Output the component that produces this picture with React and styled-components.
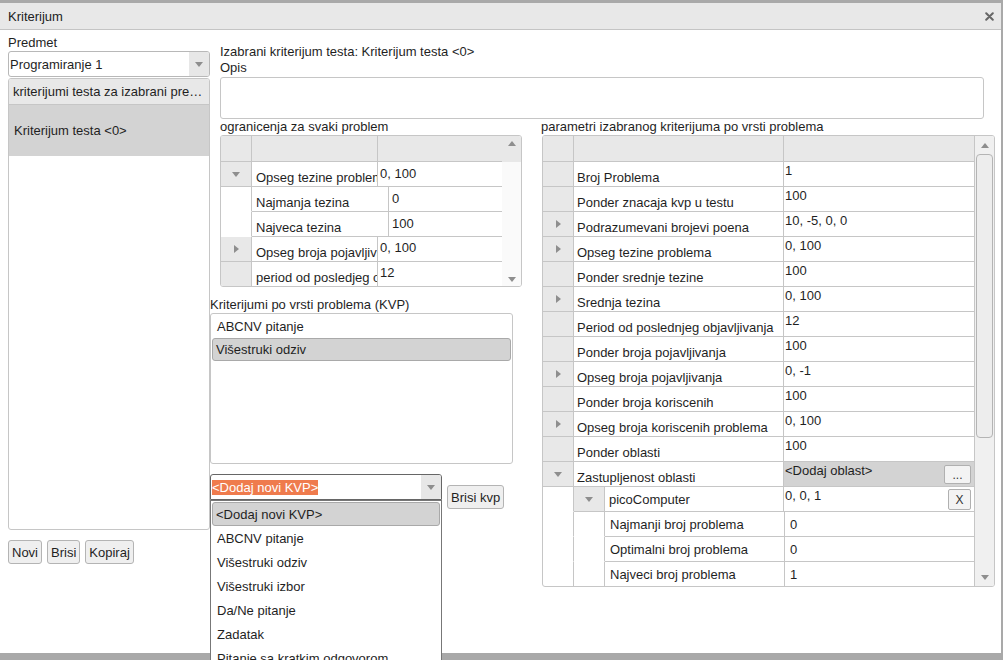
import React from 'react';
import styled, { createGlobalStyle, css } from 'styled-components';

const GlobalStyle = createGlobalStyle`
  html, body {
    margin: 0;
    padding: 0;
  }
  body {
    font-family: "Liberation Sans", Arial, sans-serif;
    font-size: 13px;
    color: #1f1f1f;
    background: #a8a8a8;
  }
  * {
    box-sizing: border-box;
  }
`;

const LINE = '#c6c6c6';
const HEAD = '#e8e8e8';
const SELECTED = '#d3d3d3';

const Screen = styled.div`
  width: 1003px;
  height: 660px;
  overflow: hidden;
  padding-top: 3px;
  background: #a9a9a9;
`;

const Window = styled.div`
  width: 1001px;
  height: 650px;
  background: #fff;
  display: flex;
  flex-direction: column;
`;

const TitleBar = styled.div`
  height: 27px;
  flex: 0 0 27px;
  background: ${HEAD};
  border-bottom: 1px solid #c4c4c4;
  display: flex;
  align-items: center;
  justify-content: space-between;
  padding: 0 7px 0 8px;
`;

const TitleText = styled.span`
  font-size: 13px;
  color: #222;
`;

const CloseIcon = () => (
  <svg width="9" height="9" viewBox="0 0 9 9">
    <path d="M1.2 1.2 L7.8 7.8 M7.8 1.2 L1.2 7.8" stroke="#666" strokeWidth="2" strokeLinecap="round" />
  </svg>
);

const Body = styled.div`
  flex: 1;
  display: flex;
`;

/* ---------- shared bits ---------- */

const Tri = styled.span`
  display: inline-block;
  width: 0;
  height: 0;
  ${(p) =>
    p.$dir === 'right'
      ? css`
          border-top: 4px solid transparent;
          border-bottom: 4px solid transparent;
          border-left: 5px solid #8e8e8e;
        `
      : p.$dir === 'up'
      ? css`
          border-left: 4px solid transparent;
          border-right: 4px solid transparent;
          border-bottom: 5px solid #8e8e8e;
        `
      : css`
          border-left: 4px solid transparent;
          border-right: 4px solid transparent;
          border-top: 5px solid #8e8e8e;
        `}
`;

const Caption = styled.div`
  line-height: 16px;
  height: 16px;
  white-space: nowrap;
  padding-left: ${(p) => p.$indent || 0}px;
  margin-top: ${(p) => p.$top || 0}px;
`;

const Button = styled.button`
  font-family: inherit;
  font-size: 13px;
  color: #1f1f1f;
  height: 24px;
  padding: 0 3px;
  background: #efefef;
  border: 1px solid #b4b4b4;
  border-radius: 3px;
  margin-top: ${(p) => p.$top || 0}px;
`;

const SmallButton = styled.button`
  font-family: inherit;
  font-size: 12px;
  color: #333;
  height: ${(p) => p.$h || 20}px;
  width: ${(p) => p.$w || 24}px;
  padding: 0;
  margin-right: 3px;
  align-self: center;
  background: #f3f3f3;
  border: 1px solid #b0b0b0;
  border-radius: 2px;
  line-height: 1;
`;

const Combo = styled.div`
  position: relative;
  width: ${(p) => p.$w}px;
  height: 26px;
  display: flex;
  align-items: center;
  background: #fff;
  border: 1px solid ${(p) => (p.$open ? '#666' : '#b8b8b8')};
  border-radius: ${(p) => (p.$open ? '3px 3px 0 0' : '3px')};
`;

const ComboText = styled.div`
  flex: 1;
  padding-left: 1px;
  white-space: nowrap;
  overflow: hidden;
`;

const Highlight = styled.span`
  background: #ef7b4d;
  color: #fff;
  line-height: 15px;
  display: inline-block;
`;

const ComboArrow = styled.div`
  width: 20px;
  align-self: stretch;
  background: #e7e7e7;
  border-radius: 0 2px 2px 0;
  display: flex;
  align-items: center;
  justify-content: center;
`;

const Popup = styled.div`
  position: absolute;
  top: 25px;
  left: -1px;
  width: 232px;
  height: 180px;
  background: #fff;
  border: 1px solid #777;
  padding: 1px 1px;
  z-index: 5;
`;

const OptionItem = styled.div`
  height: 24px;
  display: flex;
  align-items: center;
  padding-left: ${(p) => (p.$selected ? 3 : 4)}px;
  white-space: nowrap;
  border-radius: 3px;
  border: 1px solid ${(p) => (p.$selected ? '#a9a9a9' : 'transparent')};
  background: ${(p) => (p.$selected ? SELECTED : 'transparent')};
`;

/* ---------- left pane ---------- */

const LeftPane = styled.div`
  width: 210px;
  padding: 5px 0 0 8px;
  display: flex;
  flex-direction: column;
`;

const ListBox = styled.div`
  width: ${(p) => p.$w}px;
  height: ${(p) => p.$h}px;
  margin-top: ${(p) => p.$top || 0}px;
  border: 1px solid ${LINE};
  border-radius: 3px;
  overflow: hidden;
  padding: ${(p) => p.$pad || 0};
`;

const ListHeader = styled.div`
  height: 26px;
  background: ${HEAD};
  border-bottom: 1px solid ${LINE};
  padding: 0 4px;
  display: flex;
  align-items: center;
  white-space: nowrap;
  overflow: hidden;
  & > span {
    overflow: hidden;
    text-overflow: ellipsis;
  }
`;

const ListItem = styled.div`
  height: ${(p) => p.$h || 23}px;
  display: flex;
  align-items: center;
  padding-left: ${(p) => (p.$framed ? 3 : 4)}px;
  white-space: nowrap;
  border-radius: ${(p) => (p.$framed ? 3 : 0)}px;
  border: 1px solid ${(p) => (p.$framed ? '#a9a9a9' : 'transparent')};
  background: ${(p) => (p.$selected ? SELECTED : 'transparent')};
`;

const ButtonRow = styled.div`
  display: flex;
  gap: 5px;
  margin-top: ${(p) => p.$top || 0}px;
`;

/* ---------- main area ---------- */

const MainPane = styled.div`
  flex: 1;
  padding-top: 14px;
  display: flex;
  flex-direction: column;
`;

const Header = styled.div`
  padding-left: 10px;
`;

const TextArea = styled.div`
  width: 764px;
  height: 42px;
  margin-top: 1px;
  border: 1px solid ${LINE};
  border-radius: 3px;
`;

const Columns = styled.div`
  display: flex;
  align-items: flex-start;
`;

const MidPane = styled.div`
  width: 312px;
  display: flex;
  flex-direction: column;
`;

const RightPane = styled.div`
  margin-left: 19px;
  display: flex;
  flex-direction: column;
`;

const ComboRow = styled.div`
  display: flex;
  align-items: flex-start;
  gap: 5px;
  margin-top: 10px;
`;

/* ---------- tree table ---------- */

const TableBox = styled.div`
  width: ${(p) => p.$w}px;
  height: ${(p) => p.$h}px;
  margin-left: ${(p) => p.$left || 0}px;
  border: 1px solid ${LINE};
  border-radius: 3px;
  overflow: hidden;
  display: flex;
`;

const Grid = styled.div`
  flex: 1;
  display: flex;
  flex-direction: column;
`;

const Row = styled.div`
  flex: 0 0 ${(p) => p.$h || 25}px;
  height: ${(p) => p.$h || 25}px;
  display: flex;
  background: ${(p) => p.$bg || 'transparent'};
`;

const CellBase = styled.div`
  height: 100%;
  min-width: 0;
  display: flex;
  white-space: nowrap;
  overflow: hidden;
  line-height: 15px;
  border-bottom: 1px solid ${(p) => (p.$noLine ? 'transparent' : LINE)};
`;

const Gutter = styled(CellBase)`
  flex: 0 0 31px;
  align-items: center;
  justify-content: center;
  background: ${(p) => (p.$blank ? 'transparent' : HEAD)};
  border-right: 1px solid ${LINE};
`;

const LabelCell = styled(CellBase)`
  flex: 0 0 ${(p) => p.$w}px;
  align-items: ${(p) => (p.$mid ? 'center' : 'flex-end')};
  padding: 0 0 ${(p) => (p.$mid ? 0 : 1)}px ${(p) => p.$pl || 4}px;
  border-right: 1px solid ${LINE};
`;

const ValueCell = styled(CellBase)`
  flex: 1;
  align-items: ${(p) => (p.$mid ? 'center' : 'flex-start')};
  justify-content: space-between;
  padding: ${(p) => p.$pt || 0}px 0 0 ${(p) => p.$pl || 0}px;
  background: ${(p) => p.$bg || 'transparent'};
`;

const ScrollBar = styled.div`
  flex: 0 0 ${(p) => p.$w}px;
  display: flex;
  flex-direction: column;
  align-items: stretch;
  background: ${(p) => p.$bg};
  border-left: ${(p) => (p.$edge ? `1px solid ${LINE}` : 'none')};
`;

const ScrollArrow = styled.div`
  height: ${(p) => p.$h || 18}px;
  display: flex;
  align-items: center;
  justify-content: center;
`;

const Thumb = styled.div`
  height: ${(p) => p.$h}px;
  margin: 0 1px 0 1px;
  border: 1px solid #b4b4b4;
  border-radius: 4px;
  background: #ededed;
`;

const Spacer = styled.div`
  flex: 1;
`;

const HeaderRow = ({ cols }) => (
  <Row $h={26} $bg={HEAD}>
    <Gutter />
    <LabelCell $w={cols[0]} />
    <ValueCell />
  </Row>
);

/* ---------- data ---------- */

const kvpOptions = [
  '<Dodaj novi KVP>',
  'ABCNV pitanje',
  'Višestruki odziv',
  'Višestruki izbor',
  'Da/Ne pitanje',
  'Zadatak',
  'Pitanje sa kratkim odgovorom',
];

const params = [
  { label: 'Broj Problema', value: '1' },
  { label: 'Ponder znacaja kvp u testu', value: '100' },
  { label: 'Podrazumevani brojevi poena', value: '10, -5, 0, 0', arrow: 'right' },
  { label: 'Opseg tezine problema', value: '0, 100', arrow: 'right' },
  { label: 'Ponder srednje tezine', value: '100' },
  { label: 'Srednja tezina', value: '0, 100', arrow: 'right' },
  { label: 'Period od poslednjeg objavljivanja', value: '12' },
  { label: 'Ponder broja pojavljivanja', value: '100' },
  { label: 'Opseg broja pojavljivanja', value: '0, -1', arrow: 'right' },
  { label: 'Ponder broja koriscenih', value: '100' },
  { label: 'Opseg broja koriscenih problema', value: '0, 100', arrow: 'right' },
  { label: 'Ponder oblasti', value: '100' },
];

const areaChildren = [
  { label: 'Najmanji broj problema', value: '0' },
  { label: 'Optimalni broj problema', value: '0' },
  { label: 'Najveci broj problema', value: '1' },
];

/* ---------- tables ---------- */

const LimitsTable = () => (
  <TableBox $w={302} $h={152}>
    <Grid>
      <HeaderRow cols={[126]} />
      <Row>
        <Gutter>
          <Tri $dir="down" />
        </Gutter>
        <LabelCell $w={126}>Opseg tezine problema</LabelCell>
        <ValueCell $pt={4} $pl={2}>0, 100</ValueCell>
      </Row>
      <Row>
        <Gutter $blank $noLine />
        <LabelCell $w={137}>Najmanja tezina</LabelCell>
        <ValueCell $pt={4} $pl={3}>0</ValueCell>
      </Row>
      <Row>
        <Gutter $blank $noLine />
        <LabelCell $w={137}>Najveca tezina</LabelCell>
        <ValueCell $pt={4} $pl={3}>100</ValueCell>
      </Row>
      <Row>
        <Gutter>
          <Tri $dir="right" />
        </Gutter>
        <LabelCell $w={126}>Opseg broja pojavljivanja</LabelCell>
        <ValueCell $pt={3} $pl={2}>0, 100</ValueCell>
      </Row>
      <Row>
        <Gutter />
        <LabelCell $w={126}>period od posledjeg objavljivanja</LabelCell>
        <ValueCell $pt={3} $pl={2}>12</ValueCell>
      </Row>
    </Grid>
    <ScrollBar $w={19} $bg={`linear-gradient(${HEAD} 26px, #fafafa 26px)`}>
      <ScrollArrow $h={14}>
        <Tri $dir="up" />
      </ScrollArrow>
      <Spacer />
      <ScrollArrow $h={14}>
        <Tri $dir="down" />
      </ScrollArrow>
    </ScrollBar>
  </TableBox>
);

const ParamsTable = () => (
  <TableBox $w={453} $h={452} $left={1}>
    <Grid>
      <HeaderRow cols={[210]} />
      {params.map((p) => (
        <Row key={p.label}>
          <Gutter>{p.arrow && <Tri $dir={p.arrow} />}</Gutter>
          <LabelCell $w={210} $pl={3}>{p.label}</LabelCell>
          <ValueCell $pt={1} $pl={1}>
            {p.value}
          </ValueCell>
        </Row>
      ))}
      <Row>
        <Gutter>
          <Tri $dir="down" />
        </Gutter>
        <LabelCell $w={210} $pl={3}>Zastupljenost oblasti</LabelCell>
        <ValueCell $pt={1} $pl={1} $bg={SELECTED}>
          <span>&lt;Dodaj oblast&gt;</span>
          <SmallButton $w={27} $h={19}>...</SmallButton>
        </ValueCell>
      </Row>
      <Row>
        <Gutter $blank $noLine />
        <Gutter>
          <Tri $dir="down" />
        </Gutter>
        <LabelCell $w={179} $mid>
          picoComputer
        </LabelCell>
        <ValueCell $pt={1} $pl={1}>
          <span>0, 0, 1</span>
          <SmallButton $w={23} $h={21}>X</SmallButton>
        </ValueCell>
      </Row>
      {areaChildren.map((c) => (
        <Row key={c.label}>
          <Gutter $blank $noLine />
          <Gutter $blank $noLine />
          <LabelCell $w={180} $mid $pl={5}>
            {c.label}
          </LabelCell>
          <ValueCell $mid $pl={5}>
            {c.value}
          </ValueCell>
        </Row>
      ))}
    </Grid>
    <ScrollBar $w={20} $bg="#f0f0f0" $edge>
      <ScrollArrow $h={18}>
        <Tri $dir="up" />
      </ScrollArrow>
      <Thumb $h={284} />
      <Spacer />
      <ScrollArrow $h={18}>
        <Tri $dir="down" />
      </ScrollArrow>
    </ScrollBar>
  </TableBox>
);

export default function App() {
  return (
    <>
      <GlobalStyle />
      <Screen>
        <Window>
          <TitleBar>
            <TitleText>Kriterijum</TitleText>
            <CloseIcon />
          </TitleBar>
          <Body>
            <LeftPane>
              <Caption>Predmet</Caption>
              <Combo $w={202}>
                <ComboText>Programiranje 1</ComboText>
                <ComboArrow>
                  <Tri $dir="down" />
                </ComboArrow>
              </Combo>
              <ListBox $w={202} $h={452} $top={1}>
                <ListHeader>
                  <span>kriterijumi testa za izabrani predmet</span>
                </ListHeader>
                <ListItem $h={51} $selected>
                  Kriterijum testa &lt;0&gt;
                </ListItem>
              </ListBox>
              <ButtonRow $top={10}>
                <Button>Novi</Button>
                <Button>Brisi</Button>
                <Button>Kopiraj</Button>
              </ButtonRow>
            </LeftPane>

            <MainPane>
              <Header>
                <Caption>Izabrani kriterijum testa: Kriterijum testa &lt;0&gt;</Caption>
                <Caption>Opis</Caption>
                <TextArea />
              </Header>
              <Columns>
                <MidPane>
                  <Caption $indent={10}>ogranicenja za svaki problem</Caption>
                  <Header>
                    <LimitsTable />
                  </Header>
                  <Caption $top={10}>Kriterijumi po vrsti problema (KVP)</Caption>
                  <ListBox $w={303} $h={151} $top={0} $pad="1px 1px">
                    <ListItem>ABCNV pitanje</ListItem>
                    <ListItem $selected $framed>
                      Višestruki odziv
                    </ListItem>
                  </ListBox>
                  <ComboRow>
                    <Combo $w={232} $open>
                      <ComboText>
                        <Highlight>&lt;Dodaj novi KVP&gt;</Highlight>
                      </ComboText>
                      <ComboArrow>
                        <Tri $dir="down" />
                      </ComboArrow>
                      <Popup>
                        {kvpOptions.map((o, i) => (
                          <OptionItem key={o} $selected={i === 0}>
                            {o}
                          </OptionItem>
                        ))}
                      </Popup>
                    </Combo>
                    <Button $top={11}>Brisi kvp</Button>
                  </ComboRow>
                </MidPane>
                <RightPane>
                  <Caption>parametri izabranog kriterijuma po vrsti problema</Caption>
                  <ParamsTable />
                </RightPane>
              </Columns>
            </MainPane>
          </Body>
        </Window>
      </Screen>
    </>
  );
}
